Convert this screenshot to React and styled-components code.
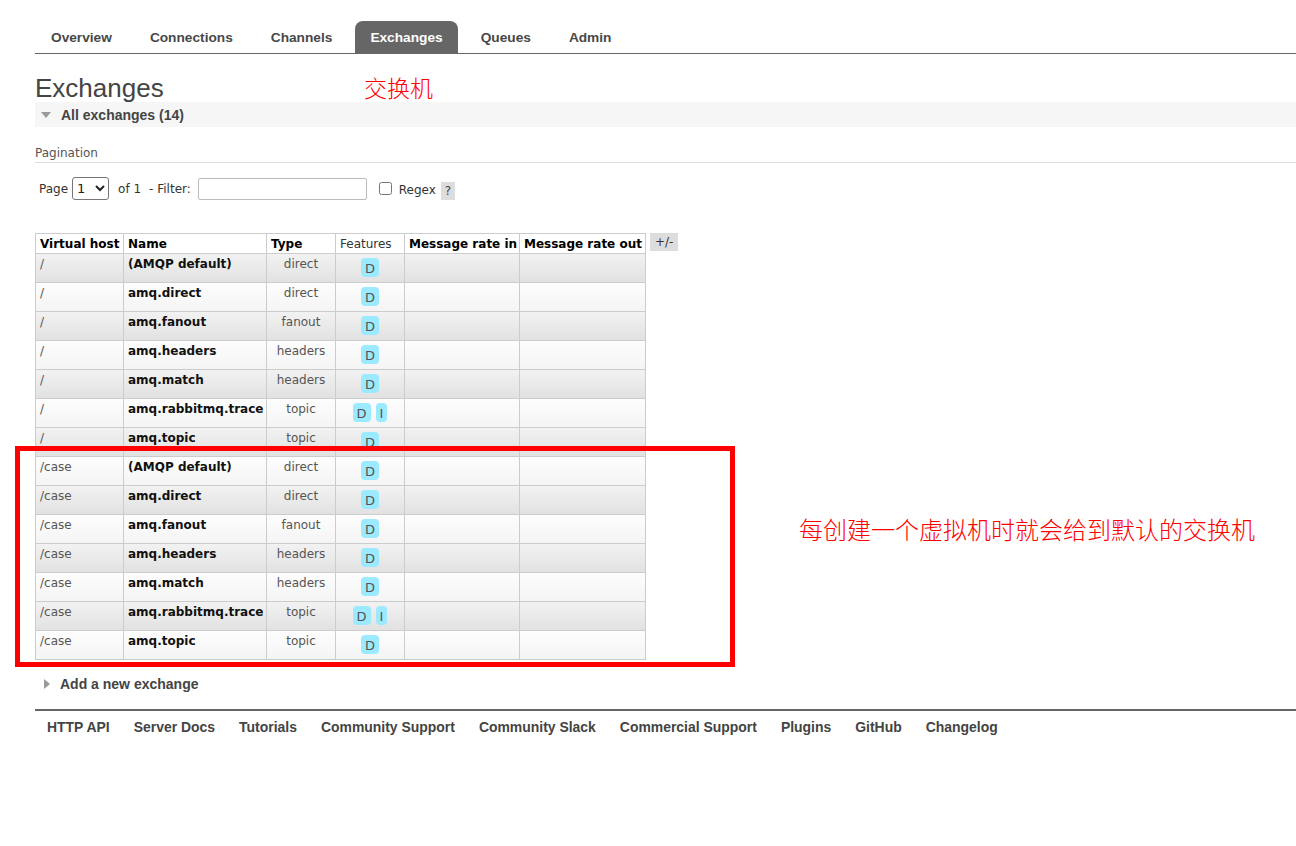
import React from 'react';
import styled, { createGlobalStyle } from 'styled-components';

const GlobalStyle = createGlobalStyle`
    html, body {
        margin: 0;
        padding: 0;
        background: #fff;
    }
    body {
        font-family: "DejaVu Sans", Verdana, sans-serif;
        font-size: 12px;
        color: #484848;
    }
`;

const Page = styled.div`
    position: relative;
    width: 1296px;
    height: 846px;
    overflow: hidden;
    padding-left: 35px;
    box-sizing: border-box;
`;

const Menu = styled.ul`
    display: flex;
    gap: 8px;
    list-style: none;
    margin: 0;
    padding: 21px 0 0 1px;
    border-bottom: 1px solid #666;
`;

const Tab = styled.li`
    height: 32px;
    padding: 0 15px;
    display: flex;
    align-items: center;
    border-radius: 8px 8px 0 0;
    font-family: "Liberation Sans", Arial, sans-serif;
    font-weight: bold;
    font-size: 13.7px;
    color: ${p => (p.$active ? '#fff' : '#484848')};
    background: ${p => (p.$active ? '#666' : 'transparent')};
`;

const Title = styled.h1`
    margin: 0;
    padding-top: 20px;
    height: 28px;
    font-family: "Liberation Sans", Arial, sans-serif;
    font-weight: normal;
    font-size: 26px;
    line-height: 28px;
    color: #444;
`;

const SectionBar = styled.div`
    height: 25px;
    display: flex;
    align-items: center;
    gap: 8px;
    padding-left: 6px;
    background: #f6f6f6;
    font-family: "Liberation Sans", Arial, sans-serif;
    font-weight: bold;
    font-size: 14px;
    color: #444;
`;

const Caret = styled.span`
    width: 0;
    height: 0;
    border-style: solid;
    border-color: transparent;
    ${p => (p.$open
        ? 'border-width: 6px 5px 0 5px; border-top-color: #999; margin-right: 2px;'
        : 'border-width: 5px 0 5px 6px; border-left-color: #999; margin-left: 4px; margin-right: 5px;')}
`;

const SubHeading = styled.div`
    margin-top: 19px;
    padding-bottom: 2px;
    border-bottom: 1px solid #ddd;
    font-size: 12px;
    color: #555;
`;

const Controls = styled.div`
    display: flex;
    align-items: center;
    height: 23px;
    margin-top: 14px;
    padding-left: 4px;
    font-size: 12px;
    color: #333;
`;

const Select = styled.select`
    width: 37px;
    height: 23px;
    margin: 0 9px 0 4px;
    font-family: "DejaVu Sans", sans-serif;
    font-size: 13px;
    border: 1px solid #767676;
    border-radius: 3px;
    background: #fff;
    color: #222;
`;

const Label = styled.span`
    margin-right: ${p => p.$mr || 0}px;
    margin-top: ${p => p.$mt || 0}px;
`;

const FilterInput = styled.input`
    width: 169px;
    height: 22px;
    box-sizing: border-box;
    margin: 0 12px 0 7px;
    border: 1px solid #bbb;
    border-radius: 2px;
`;

const Check = styled.input`
    width: 13px;
    height: 13px;
    margin: 0 7px 0 0;
`;

const Help = styled.span`
    margin-left: 5px;
    margin-top: 4px;
    padding: 2px 4px;
    background: #ddd;
    color: #444;
`;

const TableWrap = styled.div`
    display: flex;
    align-items: flex-start;
    gap: 4px;
    margin-top: 33px;
`;

const Table = styled.table`
    border-collapse: collapse;
    table-layout: fixed;
    width: 611px;
    font-size: 12px;
`;

const Th = styled.th`
    height: 19px;
    padding: 0 4px;
    border: 1px solid #ccc;
    background: #fff;
    text-align: left;
    white-space: nowrap;
    font-weight: ${p => (p.$plain ? 'normal' : 'bold')};
    color: ${p => (p.$plain ? '#333' : '#000')};
    overflow: hidden;
`;

const Tr = styled.tr`
    background: ${p => (p.$alt
        ? 'linear-gradient(#f2f2f2, #e1e1e1)'
        : 'linear-gradient(#fdfdfd, #f4f4f4)')};
`;

const Td = styled.td`
    height: 29px;
    box-sizing: border-box;
    padding: 3px 4px 0;
    border: 1px solid #ccc;
    vertical-align: top;
    white-space: nowrap;
    text-align: ${p => p.$align || 'left'};
    font-weight: ${p => (p.$bold ? 'bold' : 'normal')};
    color: ${p => (p.$bold ? '#111' : '#555')};
`;

const Badges = styled.div`
    display: flex;
    justify-content: center;
    gap: 5px;
    margin-top: 1px;
`;

const Badge = styled.span`
    display: inline-flex;
    align-items: center;
    justify-content: center;
    height: 19px;
    padding: 2px 4px 0;
    box-sizing: border-box;
    border-radius: 4px;
    background: #9beaff;
    color: #555;
    font-size: 13px;
`;

const Toggle = styled.span`
    padding: 2px 5px;
    height: 14px;
    background: #ddd;
    color: #333;
    font-size: 12px;
`;

const AddRow = styled.div`
    display: flex;
    align-items: center;
    gap: 5px;
    margin-top: 16px;
    padding-left: 5px;
    font-family: "Liberation Sans", Arial, sans-serif;
    font-weight: bold;
    font-size: 14px;
    color: #444;
`;

const Footer = styled.ul`
    display: flex;
    gap: 24px;
    list-style: none;
    margin: 17px 0 0;
    padding: 8px 0 0 12px;
    border-top: 2px solid #666;
`;

const FooterLink = styled.li`
    font-family: "Liberation Sans", Arial, sans-serif;
    font-weight: bold;
    font-size: 13.95px;
    color: #444;
`;

const Note = styled.div`
    position: absolute;
    left: ${p => p.$x}px;
    top: ${p => p.$y}px;
    font-family: "Noto Sans CJK SC", sans-serif;
    font-weight: 300;
    font-size: ${p => p.$size}px;
    line-height: 28px;
    color: #f00;
    white-space: nowrap;
`;

const RedBox = styled.div`
    position: absolute;
    left: 15px;
    top: 446px;
    width: 720px;
    height: 221px;
    box-sizing: border-box;
    border: 5px solid #f00;
`;

const tabs = ['Overview', 'Connections', 'Channels', 'Exchanges', 'Queues', 'Admin'];

const base = [
    ['(AMQP default)', 'direct', ['D']],
    ['amq.direct', 'direct', ['D']],
    ['amq.fanout', 'fanout', ['D']],
    ['amq.headers', 'headers', ['D']],
    ['amq.match', 'headers', ['D']],
    ['amq.rabbitmq.trace', 'topic', ['D', 'I']],
    ['amq.topic', 'topic', ['D']],
];

const rows = [
    ...base.map(r => ['/', ...r]),
    ...base.map(r => ['/case', ...r]),
];

const links = ['HTTP API', 'Server Docs', 'Tutorials', 'Community Support', 'Community Slack',
    'Commercial Support', 'Plugins', 'GitHub', 'Changelog'];

export default function App() {
    return (
        <Page>
            <GlobalStyle />
            <Menu>
                {tabs.map(t => (
                    <Tab key={t} $active={t === 'Exchanges'}>{t}</Tab>
                ))}
            </Menu>
            <Title>Exchanges</Title>
            <SectionBar>
                <Caret $open />
                All exchanges (14)
            </SectionBar>
            <SubHeading>Pagination</SubHeading>
            <Controls>
                <Label>Page</Label>
                <Select defaultValue="1">
                    <option value="1">1</option>
                </Select>
                <Label $mr={8}>of 1</Label>
                <Label>- Filter:</Label>
                <FilterInput type="text" />
                <Check type="checkbox" />
                <Label $mt={3}>Regex</Label>
                <Help>?</Help>
            </Controls>
            <TableWrap>
                <Table>
                    <colgroup>
                        <col style={{ width: 88 }} />
                        <col style={{ width: 143 }} />
                        <col style={{ width: 69 }} />
                        <col style={{ width: 69 }} />
                        <col style={{ width: 115 }} />
                        <col style={{ width: 126 }} />
                    </colgroup>
                    <thead>
                        <tr>
                            <Th>Virtual host</Th>
                            <Th>Name</Th>
                            <Th>Type</Th>
                            <Th $plain>Features</Th>
                            <Th>Message rate in</Th>
                            <Th>Message rate out</Th>
                        </tr>
                    </thead>
                    <tbody>
                        {rows.map(([vhost, name, type, feats], i) => (
                            <Tr key={i} $alt={i % 2 === 0}>
                                <Td>{vhost}</Td>
                                <Td $bold>{name}</Td>
                                <Td $align="center">{type}</Td>
                                <Td>
                                    <Badges>
                                        {feats.map(f => <Badge key={f}>{f}</Badge>)}
                                    </Badges>
                                </Td>
                                <Td />
                                <Td />
                            </Tr>
                        ))}
                    </tbody>
                </Table>
                <Toggle>+/-</Toggle>
            </TableWrap>
            <AddRow>
                <Caret />
                Add a new exchange
            </AddRow>
            <Footer>
                {links.map(l => <FooterLink key={l}>{l}</FooterLink>)}
            </Footer>
            <Note $x={364} $y={73} $size={23}>交换机</Note>
            <RedBox />
            <Note $x={799} $y={515} $size={24}>每创建一个虚拟机时就会给到默认的交换机</Note>
        </Page>
    );
}
